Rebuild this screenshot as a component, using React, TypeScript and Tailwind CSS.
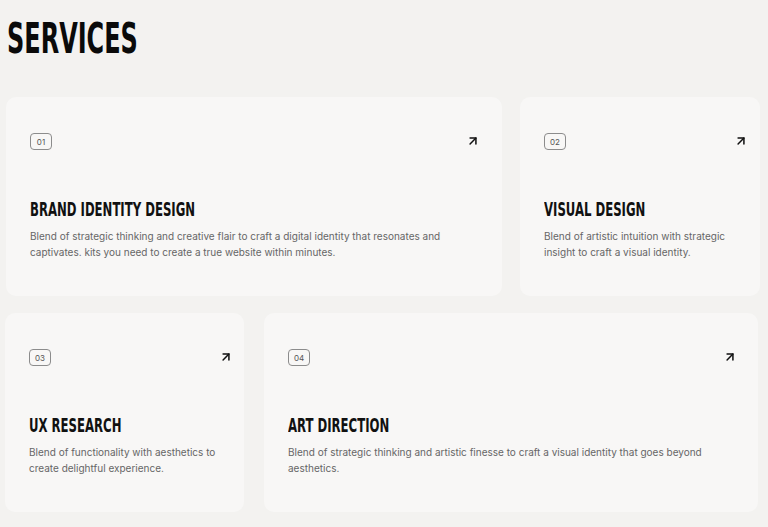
import { ArrowUpRight } from "lucide-react";

type Service = {
  num: string;
  title: string;
  copy: string;
  width: string;
  pr: string;
};

const rows: Service[][] = [
  [
    {
      num: "01",
      title: "BRAND IDENTITY DESIGN",
      copy: "Blend of strategic thinking and creative flair to craft a digital identity that resonates and captivates. kits you need to create a true website within minutes.",
      width: "w-[496px]",
      pr: "pr-6",
    },
    {
      num: "02",
      title: "VISUAL DESIGN",
      copy: "Blend of artistic intuition with strategic insight to craft a visual identity.",
      width: "w-[240px]",
      pr: "pr-[14px]",
    },
  ],
  [
    {
      num: "03",
      title: "UX RESEARCH",
      copy: "Blend of functionality with aesthetics to create delightful experience.",
      width: "w-[239px]",
      pr: "pr-[13px]",
    },
    {
      num: "04",
      title: "ART DIRECTION",
      copy: "Blend of strategic thinking and artistic finesse to craft a visual identity that goes beyond aesthetics.",
      width: "w-[494px]",
      pr: "pr-[23px]",
    },
  ],
];

// condensed display face; squeezed horizontally to get close to Oswald
const display = "font-['DejaVu_Sans_Condensed',sans-serif] font-bold";

function Card({ s }: { s: Service }) {
  return (
    <div className={`${s.width} h-[199px] shrink-0 rounded-[10px] bg-[#f8f7f6] pl-6 ${s.pr} pt-9 pb-9 flex flex-col`}>
      <div className="flex items-start justify-between">
        <span className="flex h-[17px] w-[22px] items-center justify-center rounded-[4px] border border-[#8c8c8c] text-[8px] text-[#555] font-['Inter',sans-serif]">
          {s.num}
        </span>
        <ArrowUpRight className="mt-[1px] -mr-[2px] h-[14px] w-[14px] text-[#111]" strokeWidth={2.6} />
      </div>
      <div className="mt-auto">
        <h3 className={`${display} inline-block origin-left scale-x-[0.65] text-[20px] leading-[24px] text-[#111] whitespace-nowrap`}>
          {s.title}
        </h3>
        <p className="mt-[6px] text-[10px] leading-[16px] text-[#666] font-['Inter',sans-serif]">{s.copy}</p>
      </div>
    </div>
  );
}

export default function App() {
  return (
    <div className="h-[527px] w-[768px] overflow-hidden bg-[#f3f2f0]">
      <div className="pl-[7px] pt-[16px] h-[97px]">
        <h1 className={`${display} inline-block origin-left scale-x-[0.62] text-[43px] leading-[44px] text-[#0a0a0a]`}>
          SERVICES
        </h1>
      </div>
      <div className="flex flex-col gap-[17px]">
        <div className="flex gap-[18px] pl-[6px]">
          {rows[0].map((s) => (
            <Card key={s.num} s={s} />
          ))}
        </div>
        <div className="flex gap-[20px] pl-[5px]">
          {rows[1].map((s) => (
            <Card key={s.num} s={s} />
          ))}
        </div>
      </div>
    </div>
  );
}
